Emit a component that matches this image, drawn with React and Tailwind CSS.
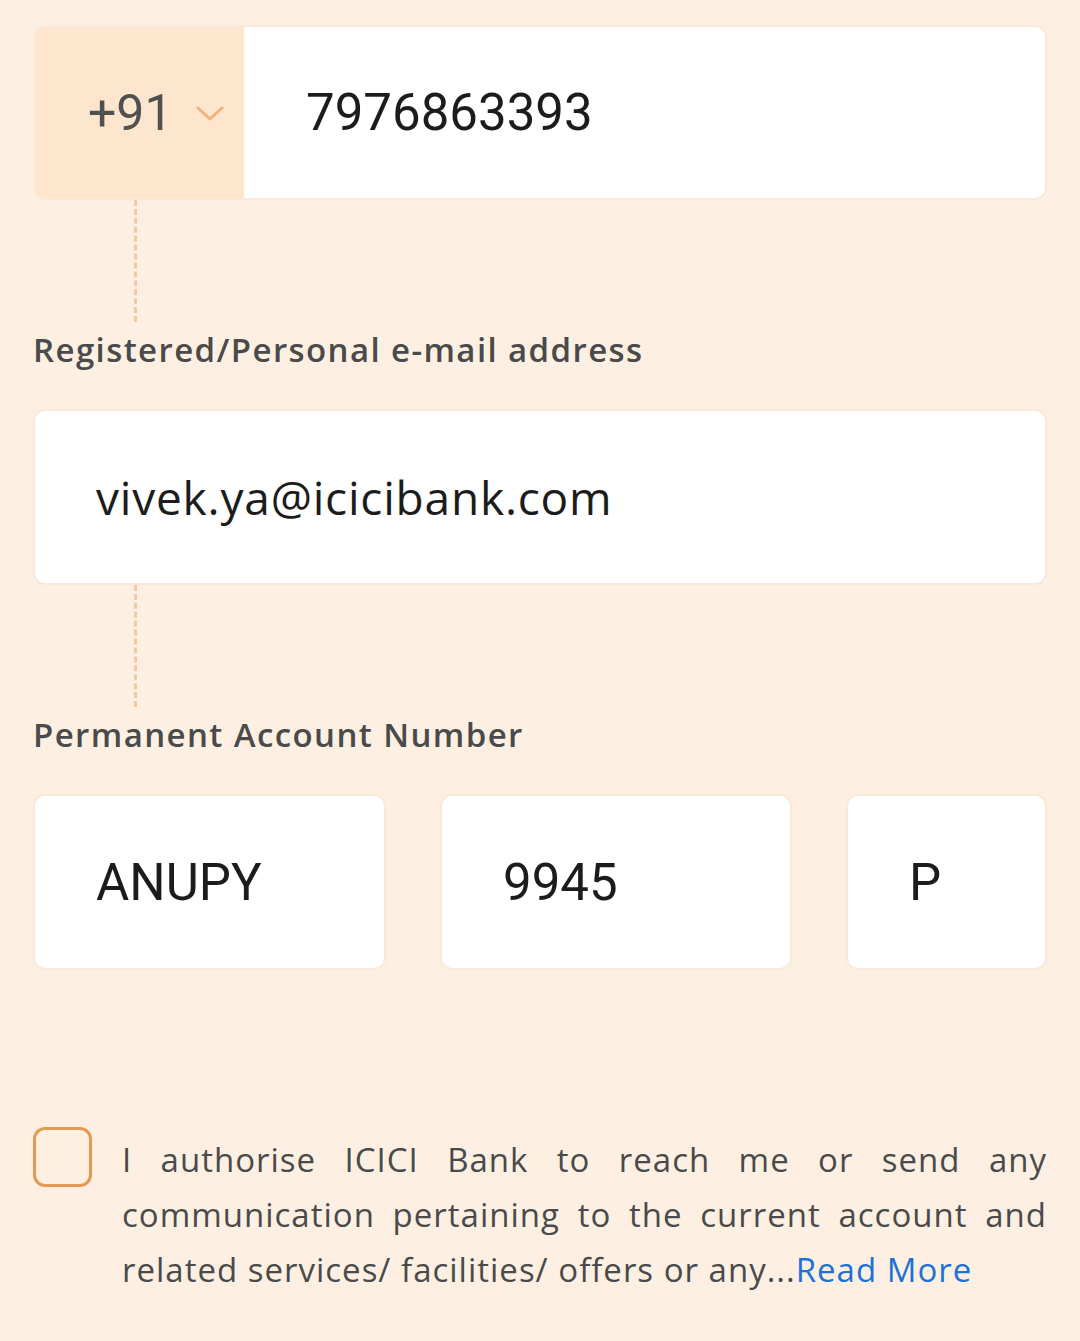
import React from "react";

const label = "text-[33px] font-semibold text-[#4a4a4a] leading-none tracking-[1.4px]";
const boxBase = "bg-white rounded-[12px] border-2 border-[#f7eadb]";

function Dashed({ h }) {
  return (
    <div className="pl-[101px]">
      <div
        className={`w-0 border-l-[3px] border-dashed border-[#f5c9a0]`}
        style={{ height: h }}
      />
    </div>
  );
}

export default function App() {
  return (
    <div
      className="w-[1080px] h-[1341px] bg-[#fdf0e2] px-[33px] pt-[25px] overflow-hidden"
      style={{ fontFamily: "'Open Sans', 'Noto Sans', sans-serif" }}
    >
      {/* phone */}
      <div className="flex h-[175px] rounded-[12px] border-2 border-[#f7eadb] overflow-hidden">
        <div className="w-[209px] bg-[#fde6cd] flex items-center pl-[53px] gap-[22px]">
          <span
            className="text-[50px] text-[#505050] leading-none"
            style={{ fontFamily: "Roboto, 'Liberation Sans', sans-serif" }}
          >
            +91
          </span>
          <svg width="30" height="20" viewBox="0 0 30 20" className="mt-[2px]">
            <path d="M3 4 L15 15 L27 4" fill="none" stroke="#f3b27a" strokeWidth="3" strokeLinecap="round" strokeLinejoin="round" />
          </svg>
        </div>
        <div className="flex-1 bg-white flex items-center pl-[62px]">
          <span
            className="text-[51px] text-[#1c1c1c] leading-none"
            style={{ fontFamily: "Roboto, 'Liberation Sans', sans-serif" }}
          >
            7976863393
          </span>
        </div>
      </div>

      <Dashed h={122} />

      <div className="pt-[11px] pb-[43px]">
        <div className={label}>Registered/Personal e-mail address</div>
      </div>

      <div className={`${boxBase} h-[176px] flex items-center pl-[61px]`}>
        <span className="text-[46px] text-[#1c1c1c] leading-none tracking-[0.8px]">vivek.ya@icicibank.com</span>
      </div>

      <Dashed h={122} />

      <div className="pt-[11px] pb-[43px]">
        <div className={label}>Permanent Account Number</div>
      </div>

      <div className="flex gap-[54px]">
        {[
          ["ANUPY", "w-[353px]"],
          ["9945", "w-[352px]"],
          ["P", "flex-1"],
        ].map(([t, w]) => (
          <div key={t} className={`${boxBase} ${w} h-[176px] flex items-center pl-[61px]`}>
            <span
              className="text-[51px] text-[#1c1c1c] leading-none"
              style={{ fontFamily: "Roboto, 'Liberation Sans', sans-serif" }}
            >
              {t}
            </span>
          </div>
        ))}
      </div>

      <div className="flex gap-[30px] mt-[157px]">
        <div className="w-[59px] h-[60px] shrink-0 rounded-[12px] border-[3px] border-[#e29a55]" />
        <p className="flex-1 text-[33px] leading-[55px] text-[#4a4a4a] text-justify tracking-[1px] mt-[5px]">
          I authorise ICICI Bank to reach me or send any communication pertaining to the current account and related services/ facilities/ offers or any...
          <span className="text-[#1d72d6]">Read More</span>
        </p>
      </div>
    </div>
  );
}
